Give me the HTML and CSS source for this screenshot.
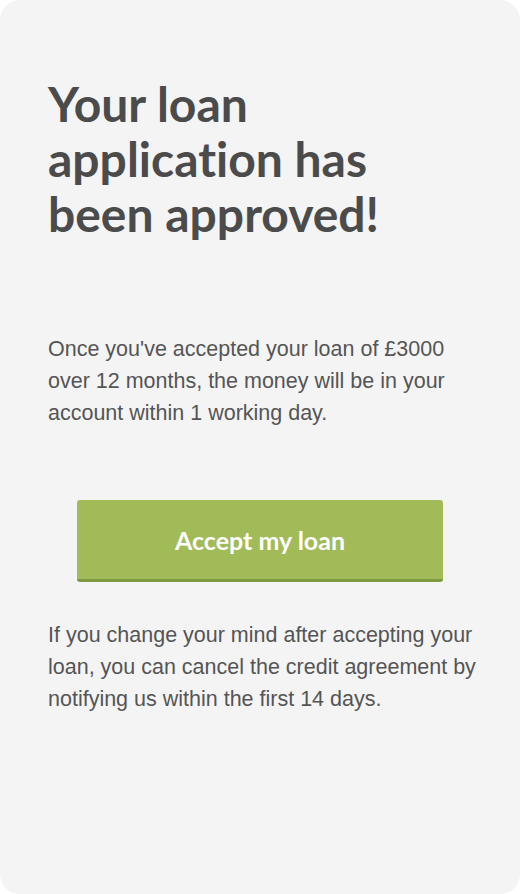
FILE: index.html
```html
<!DOCTYPE html>
<html lang="en">
<head>
    <meta charset="UTF-8">
    <title>Loan approved</title>
    <link rel="stylesheet" href="styles.css">
</head>
<body>
    <div class="card">
        <h1 class="title">Your loan application has been approved!</h1>
        <p class="text intro">Once you've accepted your loan of £3000<br> over 12 months, the money will be in your<br> account within 1 working day.</p>
        <button class="accept-btn">Accept my loan</button>
        <p class="text note">If you change your mind after accepting your<br> loan, you can cancel the credit agreement by<br> notifying us within the first 14 days.</p>
    </div>
</body>
</html>
```

FILE: styles.css
```css
body {
    margin: 0;
    background: #ffffff;
}

.card {
    box-sizing: border-box;
    width: 520px;
    height: 894px;
    background: #f4f4f4;
    border-radius: 20px;
    padding: 76px 20px 0 48px;
    display: flex;
    flex-direction: column;
}

.title {
    margin: 0;
    font-family: Lato, "Liberation Sans", sans-serif;
    font-weight: bold;
    font-size: 48px;
    line-height: 55px;
    color: #4b4b4b;
    font-variant-ligatures: none;
    padding-right: 48px;
}

.text {
    margin: 0;
    font-family: "Liberation Sans", Arial, sans-serif;
    font-size: 21.5px;
    line-height: 32px;
    color: #555555;
    white-space: nowrap;
}

.intro {
    margin-top: 92px;
}

.accept-btn {
    box-sizing: border-box;
    align-self: flex-start;
    width: 366px;
    height: 82px;
    margin: 71px 0 0 29px;
    border: none;
    border-bottom: 3px solid #7e9a41;
    border-radius: 3px;
    background: #a0bb57;
    color: #ffffff;
    font-family: Lato, "Liberation Sans", sans-serif;
    font-weight: bold;
    font-size: 25px;
    cursor: pointer;
}

.note {
    margin-top: 37px;
}
```
